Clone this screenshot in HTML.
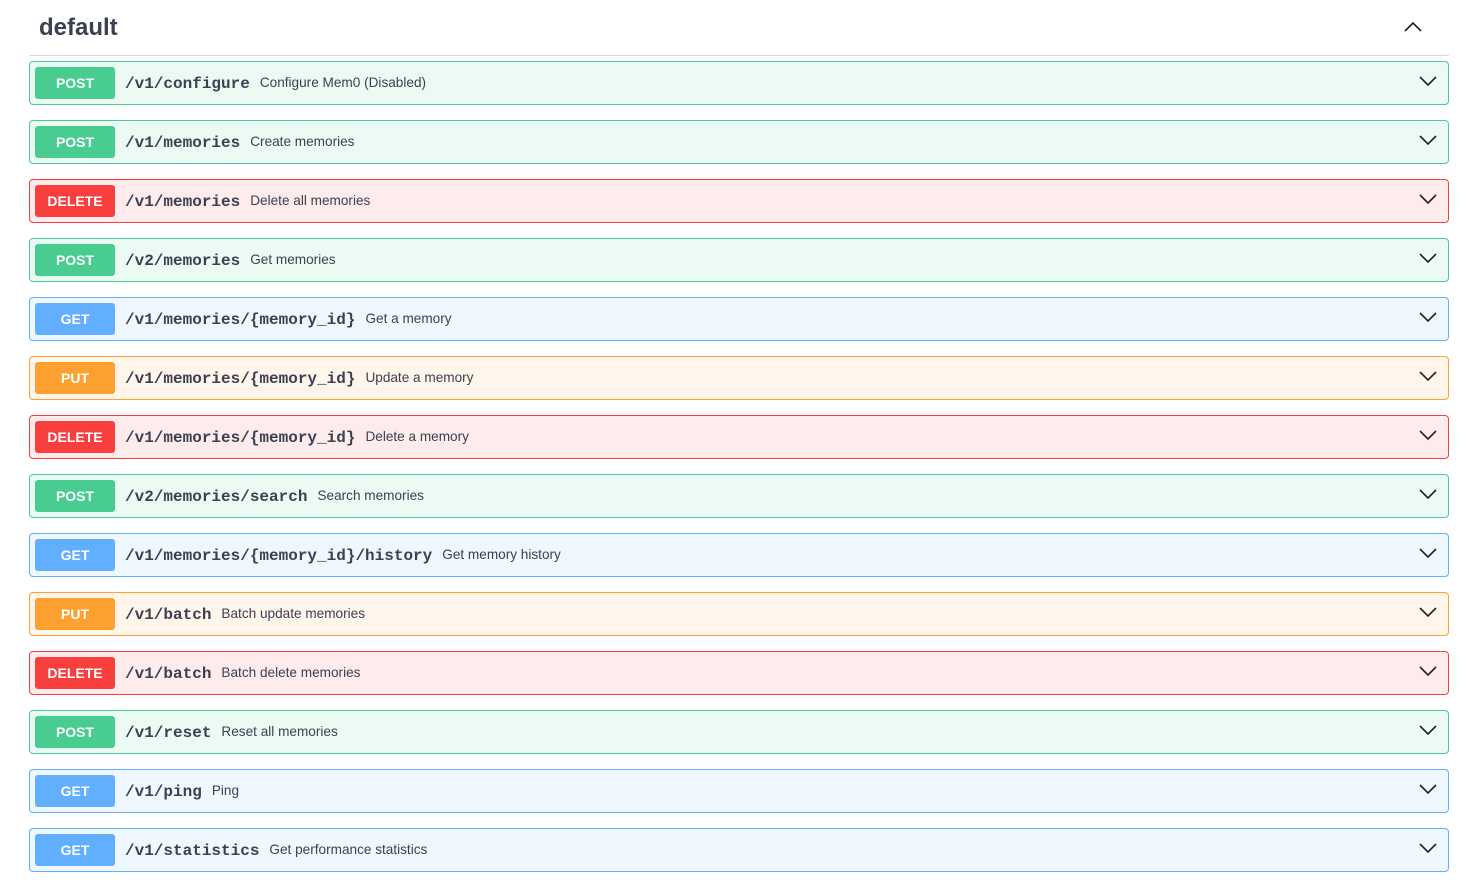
<!DOCTYPE html><html><head><style>
body{margin:0;background:#fff;font-family:"Liberation Sans",sans-serif;}
.h{position:absolute;left:29px;top:0;width:1420px;height:55px;border-bottom:1px solid #d8d8d8;}
.h span{position:absolute;left:10px;top:14px;font-size:24px;font-weight:bold;color:#3b4151;}
.h svg{position:absolute;left:1375px;top:21px;}
.op{position:absolute;left:29px;width:1418px;height:42px;border:1px solid;border-radius:4px;}
.b{position:absolute;left:5px;top:5px;width:80px;height:32px;border-radius:3px;color:#fff;font-weight:bold;font-size:14px;text-align:center;line-height:32px;}
.p{position:absolute;left:95px;top:13px;font-family:"Liberation Mono",monospace;font-weight:bold;font-size:16px;color:#3b4151;white-space:nowrap;}
.p i{font-style:normal;font-family:"Liberation Sans",sans-serif;font-weight:normal;font-size:13.6px;margin-left:10px;position:relative;top:-1px;}
.op svg{position:absolute;left:1389px;top:13px;}
.post{background:rgba(73,204,144,.1);border-color:#49cc90}.post .b{background:#49cc90}
.del{background:rgba(249,62,62,.1);border-color:#f93e3e}.del .b{background:#f93e3e}
.get{background:rgba(97,175,254,.1);border-color:#61affe}.get .b{background:#61affe}
.put{background:rgba(252,161,48,.1);border-color:#fca130}.put .b{background:#fca130}
</style></head><body>
<div class="h"><span>default</span><svg width="18" height="12" viewBox="0 0 18 12"><path d="M1 10 L9 2 L17 10" fill="none" stroke="#222" stroke-width="1.6"/></svg></div>
<div class="op post" style="top:61px"><div class="b">POST</div><div class="p">/v1/configure<i>Configure Mem0 (Disabled)</i></div><svg width="18" height="12"><path d="M1 2 L9 10 L17 2" fill="none" stroke="#222" stroke-width="1.6"/></svg></div>
<div class="op post" style="top:120px"><div class="b">POST</div><div class="p">/v1/memories<i>Create memories</i></div><svg width="18" height="12"><path d="M1 2 L9 10 L17 2" fill="none" stroke="#222" stroke-width="1.6"/></svg></div>
<div class="op del" style="top:179px"><div class="b">DELETE</div><div class="p">/v1/memories<i>Delete all memories</i></div><svg width="18" height="12"><path d="M1 2 L9 10 L17 2" fill="none" stroke="#222" stroke-width="1.6"/></svg></div>
<div class="op post" style="top:238px"><div class="b">POST</div><div class="p">/v2/memories<i>Get memories</i></div><svg width="18" height="12"><path d="M1 2 L9 10 L17 2" fill="none" stroke="#222" stroke-width="1.6"/></svg></div>
<div class="op get" style="top:297px"><div class="b">GET</div><div class="p">/v1/memories/{memory_id}<i>Get a memory</i></div><svg width="18" height="12"><path d="M1 2 L9 10 L17 2" fill="none" stroke="#222" stroke-width="1.6"/></svg></div>
<div class="op put" style="top:356px"><div class="b">PUT</div><div class="p">/v1/memories/{memory_id}<i>Update a memory</i></div><svg width="18" height="12"><path d="M1 2 L9 10 L17 2" fill="none" stroke="#222" stroke-width="1.6"/></svg></div>
<div class="op del" style="top:415px"><div class="b">DELETE</div><div class="p">/v1/memories/{memory_id}<i>Delete a memory</i></div><svg width="18" height="12"><path d="M1 2 L9 10 L17 2" fill="none" stroke="#222" stroke-width="1.6"/></svg></div>
<div class="op post" style="top:474px"><div class="b">POST</div><div class="p">/v2/memories/search<i>Search memories</i></div><svg width="18" height="12"><path d="M1 2 L9 10 L17 2" fill="none" stroke="#222" stroke-width="1.6"/></svg></div>
<div class="op get" style="top:533px"><div class="b">GET</div><div class="p">/v1/memories/{memory_id}/history<i>Get memory history</i></div><svg width="18" height="12"><path d="M1 2 L9 10 L17 2" fill="none" stroke="#222" stroke-width="1.6"/></svg></div>
<div class="op put" style="top:592px"><div class="b">PUT</div><div class="p">/v1/batch<i>Batch update memories</i></div><svg width="18" height="12"><path d="M1 2 L9 10 L17 2" fill="none" stroke="#222" stroke-width="1.6"/></svg></div>
<div class="op del" style="top:651px"><div class="b">DELETE</div><div class="p">/v1/batch<i>Batch delete memories</i></div><svg width="18" height="12"><path d="M1 2 L9 10 L17 2" fill="none" stroke="#222" stroke-width="1.6"/></svg></div>
<div class="op post" style="top:710px"><div class="b">POST</div><div class="p">/v1/reset<i>Reset all memories</i></div><svg width="18" height="12"><path d="M1 2 L9 10 L17 2" fill="none" stroke="#222" stroke-width="1.6"/></svg></div>
<div class="op get" style="top:769px"><div class="b">GET</div><div class="p">/v1/ping<i>Ping</i></div><svg width="18" height="12"><path d="M1 2 L9 10 L17 2" fill="none" stroke="#222" stroke-width="1.6"/></svg></div>
<div class="op get" style="top:828px"><div class="b">GET</div><div class="p">/v1/statistics<i>Get performance statistics</i></div><svg width="18" height="12"><path d="M1 2 L9 10 L17 2" fill="none" stroke="#222" stroke-width="1.6"/></svg></div>
</body></html>
